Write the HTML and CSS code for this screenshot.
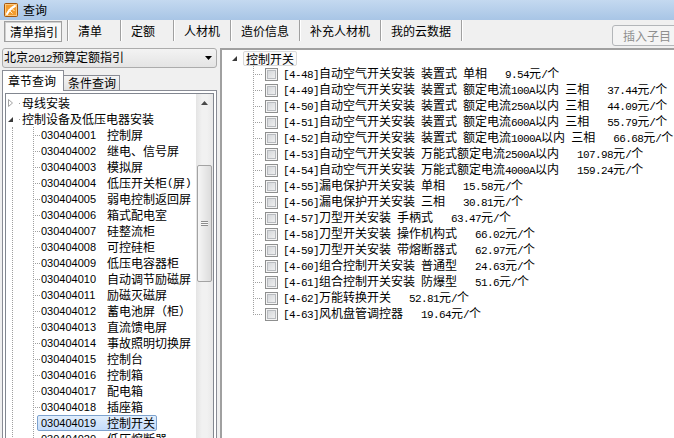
FILE: index.html
```html
<!DOCTYPE html>
<html lang="zh-CN">
<head>
<meta charset="utf-8">
<title>查询</title>
<link rel="stylesheet" href="styles.css">
</head>
<body>
<div class="window">
  <div class="titlebar">
    <svg class="appicon" viewBox="0 0 14 14">
      <rect x="0.5" y="0.5" width="13" height="13" rx="1" fill="#f39c2e" stroke="#a4560c"/>
      <rect x="1.5" y="1.5" width="11" height="11" fill="none" stroke="#fcc77a"/>
      <path d="M3 11 C5 7 8 4.5 11 3" stroke="#fff" stroke-width="2" fill="none" stroke-linecap="round"/>
      <path d="M4.5 6.5 L8.5 10.5 M7 4.5 L10.5 8" stroke="#fff2d8" stroke-width="1" fill="none"/>
    </svg>
    <span class="title">查询</span>
  </div>

  <div class="toolbar">
    <div class="tab active">清单指引</div>
    <div class="tab">清单</div>
    <div class="tab">定额</div>
    <div class="tab">人材机</div>
    <div class="tab">造价信息</div>
    <div class="tab">补充人材机</div>
    <div class="tab">我的云数据</div>
    <div class="tab-end"></div>
    <button class="insert" disabled>插入子目</button>
  </div>

  <div class="main">
    <div class="left">
      <div class="combo">
        <span class="combo-text">北京<span class="m">2012</span>预算定额指引</span>
        <svg class="combo-arrow" viewBox="0 0 7 4"><path d="M0 0H7L3.5 4Z" fill="#000"/></svg>
      </div>
      <div class="subtabs">
        <div class="subtab active">章节查询</div>
        <div class="subtab">条件查询</div>
      </div>
      <div class="page">
        <div class="listbox">
          <div class="ltree">
            <div class="lrow">
              <svg class="exp" viewBox="0 0 7 8"><path d="M1.5 0.5L5.5 4L1.5 7.5Z" fill="#fff" stroke="#a2a2a2"/></svg>
              <i class="tick"></i><span class="lbl">母线安装</span>
            </div>
            <div class="lrow">
              <svg class="exp" viewBox="0 0 7 8"><path d="M6 2V7H1Z" fill="#3a3a3a"/></svg>
              <i class="tick"></i><span class="lbl">控制设备及低压电器安装</span>
            </div>
            <div class="lgroup">
              <div class="crow"><i class="elbow"></i><span class="item"><span class="code">030404001</span>控制屏</span></div>
              <div class="crow"><i class="elbow"></i><span class="item"><span class="code">030404002</span>继电、信号屏</span></div>
              <div class="crow"><i class="elbow"></i><span class="item"><span class="code">030404003</span>模拟屏</span></div>
              <div class="crow"><i class="elbow"></i><span class="item"><span class="code">030404004</span>低压开关柜<span class="m">(</span>屏<span class="m">)</span></span></div>
              <div class="crow"><i class="elbow"></i><span class="item"><span class="code">030404005</span>弱电控制返回屏</span></div>
              <div class="crow"><i class="elbow"></i><span class="item"><span class="code">030404006</span>箱式配电室</span></div>
              <div class="crow"><i class="elbow"></i><span class="item"><span class="code">030404007</span>硅整流柜</span></div>
              <div class="crow"><i class="elbow"></i><span class="item"><span class="code">030404008</span>可控硅柜</span></div>
              <div class="crow"><i class="elbow"></i><span class="item"><span class="code">030404009</span>低压电容器柜</span></div>
              <div class="crow"><i class="elbow"></i><span class="item"><span class="code">030404010</span>自动调节励磁屏</span></div>
              <div class="crow"><i class="elbow"></i><span class="item"><span class="code">030404011</span>励磁灭磁屏</span></div>
              <div class="crow"><i class="elbow"></i><span class="item"><span class="code">030404012</span>蓄电池屏（柜）</span></div>
              <div class="crow"><i class="elbow"></i><span class="item"><span class="code">030404013</span>直流馈电屏</span></div>
              <div class="crow"><i class="elbow"></i><span class="item"><span class="code">030404014</span>事故照明切换屏</span></div>
              <div class="crow"><i class="elbow"></i><span class="item"><span class="code">030404015</span>控制台</span></div>
              <div class="crow"><i class="elbow"></i><span class="item"><span class="code">030404016</span>控制箱</span></div>
              <div class="crow"><i class="elbow"></i><span class="item"><span class="code">030404017</span>配电箱</span></div>
              <div class="crow"><i class="elbow"></i><span class="item"><span class="code">030404018</span>插座箱</span></div>
              <div class="crow"><i class="elbow"></i><span class="item sel"><span class="code">030404019</span>控制开关</span></div>
              <div class="crow"><i class="elbow"></i><span class="item"><span class="code">030404020</span>低压熔断器</span></div>
            </div>
          </div>
          <div class="vscroll">
            <div class="sb-up"><svg class="sb-arrow" viewBox="0 0 7 4"><path d="M0 4H7L3.5 0Z" fill="#4a4a4a"/></svg></div>
            <div class="thumb"><i class="grip"></i></div>
          </div>
        </div>
      </div>
    </div>

    <div class="right">
      <div class="rroot">
        <svg class="exp" viewBox="0 0 7 8"><path d="M6 2V7H1Z" fill="#3a3a3a"/></svg>
        <span class="rlabel">控制开关</span>
      </div>
      <div class="rrow"><i class="elbow w"></i><i class="chk"></i><span class="rtext"><span class="m">[4-48]</span>自动空气开关安装<span class="m"> </span>装置式<span class="m"> </span>单相<span class="m">   9.54</span>元<span class="m">/</span>个</span></div>
      <div class="rrow"><i class="elbow w"></i><i class="chk"></i><span class="rtext"><span class="m">[4-49]</span>自动空气开关安装<span class="m"> </span>装置式<span class="m"> </span>额定电流<span class="m">100A</span>以内<span class="m"> </span>三相<span class="m">   37.44</span>元<span class="m">/</span>个</span></div>
      <div class="rrow"><i class="elbow w"></i><i class="chk"></i><span class="rtext"><span class="m">[4-50]</span>自动空气开关安装<span class="m"> </span>装置式<span class="m"> </span>额定电流<span class="m">250A</span>以内<span class="m"> </span>三相<span class="m">   44.09</span>元<span class="m">/</span>个</span></div>
      <div class="rrow"><i class="elbow w"></i><i class="chk"></i><span class="rtext"><span class="m">[4-51]</span>自动空气开关安装<span class="m"> </span>装置式<span class="m"> </span>额定电流<span class="m">600A</span>以内<span class="m"> </span>三相<span class="m">   55.79</span>元<span class="m">/</span>个</span></div>
      <div class="rrow"><i class="elbow w"></i><i class="chk"></i><span class="rtext"><span class="m">[4-52]</span>自动空气开关安装<span class="m"> </span>装置式<span class="m"> </span>额定电流<span class="m">1000A</span>以内<span class="m"> </span>三相<span class="m">   66.68</span>元<span class="m">/</span>个</span></div>
      <div class="rrow"><i class="elbow w"></i><i class="chk"></i><span class="rtext"><span class="m">[4-53]</span>自动空气开关安装<span class="m"> </span>万能式额定电流<span class="m">2500A</span>以内<span class="m">   107.98</span>元<span class="m">/</span>个</span></div>
      <div class="rrow"><i class="elbow w"></i><i class="chk"></i><span class="rtext"><span class="m">[4-54]</span>自动空气开关安装<span class="m"> </span>万能式额定电流<span class="m">4000A</span>以内<span class="m">   159.24</span>元<span class="m">/</span>个</span></div>
      <div class="rrow"><i class="elbow w"></i><i class="chk"></i><span class="rtext"><span class="m">[4-55]</span>漏电保护开关安装<span class="m"> </span>单相<span class="m">   15.58</span>元<span class="m">/</span>个</span></div>
      <div class="rrow"><i class="elbow w"></i><i class="chk"></i><span class="rtext"><span class="m">[4-56]</span>漏电保护开关安装<span class="m"> </span>三相<span class="m">   30.81</span>元<span class="m">/</span>个</span></div>
      <div class="rrow"><i class="elbow w"></i><i class="chk"></i><span class="rtext"><span class="m">[4-57]</span>刀型开关安装<span class="m"> </span>手柄式<span class="m">   63.47</span>元<span class="m">/</span>个</span></div>
      <div class="rrow"><i class="elbow w"></i><i class="chk"></i><span class="rtext"><span class="m">[4-58]</span>刀型开关安装<span class="m"> </span>操作机构式<span class="m">   66.02</span>元<span class="m">/</span>个</span></div>
      <div class="rrow"><i class="elbow w"></i><i class="chk"></i><span class="rtext"><span class="m">[4-59]</span>刀型开关安装<span class="m"> </span>带熔断器式<span class="m">   62.97</span>元<span class="m">/</span>个</span></div>
      <div class="rrow"><i class="elbow w"></i><i class="chk"></i><span class="rtext"><span class="m">[4-60]</span>组合控制开关安装<span class="m"> </span>普通型<span class="m">   24.63</span>元<span class="m">/</span>个</span></div>
      <div class="rrow"><i class="elbow w"></i><i class="chk"></i><span class="rtext"><span class="m">[4-61]</span>组合控制开关安装<span class="m"> </span>防爆型<span class="m">   51.6</span>元<span class="m">/</span>个</span></div>
      <div class="rrow"><i class="elbow w"></i><i class="chk"></i><span class="rtext"><span class="m">[4-62]</span>万能转换开关<span class="m">   52.81</span>元<span class="m">/</span>个</span></div>
      <div class="rrow"><i class="elbow w last"></i><i class="chk"></i><span class="rtext"><span class="m">[4-63]</span>风机盘管调控器<span class="m">   19.64</span>元<span class="m">/</span>个</span></div>
    </div>
  </div>
</div>
</body>
</html>
```

FILE: styles.css
```css
* { box-sizing: border-box; }
html, body { margin: 0; padding: 0; }
body {
  width: 674px;
  height: 438px;
  overflow: hidden;
  background: #f0f0f0;
  color: #000;
  font: 12px/16px "Noto Sans CJK SC", "Noto Sans CJK JP", sans-serif;
}
.window {
  width: 674px;
  height: 438px;
  overflow: hidden;
  display: flex;
  flex-direction: column;
}

/* title bar */
.titlebar {
  height: 20px;
  flex: none;
  display: flex;
  align-items: center;
  padding-left: 4px;
  background: linear-gradient(#c4d9f0, #a8c5e6);
}
.appicon { width: 14px; height: 14px; flex: none; display: block; }
.title { margin-left: 5px; line-height: 16px; }

/* top tab strip */
.toolbar {
  height: 28px;
  flex: none;
  display: flex;
  align-items: flex-start;
  padding-left: 4px;
}
.tab {
  height: 21px;
  line-height: 21px;
  min-width: 53px;
  padding: 0 10px;
  border-left: 1px solid #a0a0a0;
  box-shadow: inset 1px 0 0 #fff;
  white-space: nowrap;
  flex: none;
}
.tab.active {
  width: 58px;
  min-width: 0;
  margin-top: 1px;
  margin-right: 5px;
  padding: 0 0 0 5px;
  line-height: 19px;
  border: 1px solid #a0a0a0;
  box-shadow: inset 1px 1px 0 #cfcfcf;
  background: #f7f7f7;
}
.tab-end {
  width: 2px;
  height: 21px;
  flex: none;
  border-left: 1px solid #a0a0a0;
  box-shadow: inset 1px 0 0 #fff;
}
.insert {
  flex: none;
  width: 80px;
  height: 21px;
  margin: 5px -18px 0 auto;
  padding: 0 0 0 10px;
  text-align: left;
  font: 12px/19px "Noto Sans CJK SC", sans-serif;
  color: #8f8f8f;
  background: #f4f4f4;
  border: 1px solid #b3b6b9;
  border-radius: 3px;
}

/* main split */
.main {
  height: 400px;
  flex: none;
  display: flex;
}
.left {
  width: 220px;
  flex: none;
  padding-left: 2px;
  display: flex;
  flex-direction: column;
}
.combo {
  width: 215px;
  height: 20px;
  flex: none;
  display: flex;
  align-items: center;
  justify-content: space-between;
  padding: 0 4px 0 1px;
  border: 1px solid #acacac;
  border-radius: 3px;
  background: linear-gradient(#f3f3f3, #e4e4e4);
  white-space: nowrap;
}
.combo-arrow { width: 7px; height: 4px; display: block; }

.subtabs {
  height: 21px;
  margin-top: 2px;
  flex: none;
  display: flex;
  align-items: flex-end;
  position: relative;
  z-index: 1;
}
.subtab {
  height: 15px;
  margin-bottom: 1px;
  padding: 0 3px 0 4px;
  line-height: 14px;
  border: 1px solid #898c95;
  border-left: 0;
  border-bottom: 0;
  background: linear-gradient(#f4f4f4, #e2e2e2);
  white-space: nowrap;
}
.subtab.active {
  width: 62px;
  height: 21px;
  margin-bottom: 0;
  padding: 0 0 0 5px;
  line-height: 19px;
  border-left: 1px solid #898c95;
  background: #fff;
}

.page {
  width: 215px;
  flex: 1;
  min-height: 0;
  margin-top: -1px;
  padding: 2px;
  border: 1px solid #898c95;
  background: #fff;
  display: flex;
}
.listbox {
  flex: 1;
  display: flex;
  border: 1px solid #828790;
  overflow: hidden;
}
.ltree {
  flex: 1;
  min-width: 0;
  padding-top: 1px;
  overflow: hidden;
}

/* left tree */
.lrow {
  height: 16px;
  display: flex;
  align-items: center;
  padding-left: 1px;
  white-space: nowrap;
}
.exp { width: 7px; height: 8px; flex: none; display: block; }
.tick { width: 1px; height: 1px; margin-left: 5px; background: #a0a0a0; flex: none; }
.lbl { margin-left: 2px; }
.lgroup {
  margin-left: 6px;
  border-left: 1px dotted #a0a0a0;
}
.crow {
  height: 16px;
  display: flex;
  align-items: center;
  padding-left: 20px;
  white-space: nowrap;
}
.elbow {
  width: 7px;
  height: 16px;
  flex: none;
  background:
    repeating-linear-gradient(to bottom, #a0a0a0 0 1px, transparent 1px 2px) 0 0 / 1px 100% no-repeat,
    repeating-linear-gradient(to right, #a0a0a0 0 1px, transparent 1px 2px) 0 8px / 100% 1px no-repeat;
}
.elbow.w { width: 10px; }
.elbow.last { background-size: 1px 9px, 100% 1px; }
.item {
  height: 16px;
  margin-left: -3px;
  padding: 0 1px 0 3px;
  border: 1px solid transparent;
  border-radius: 2px;
  display: flex;
  align-items: center;
  line-height: 14px;
}
.item.sel {
  border-color: #7da2ce;
  background: linear-gradient(#e1eefc, #c4dcfb);
}
.code {
  width: 66px;
  flex: none;
  font: 11px/14px "Liberation Sans", Arial, sans-serif;
}

/* scrollbar */
.vscroll {
  width: 17px;
  flex: none;
  display: flex;
  flex-direction: column;
  background: linear-gradient(to right, #e4e4e4, #f1f1f1 35%, #f1f1f1 65%, #e8e8e8);
}
.sb-up {
  height: 17px;
  flex: none;
  display: flex;
  align-items: center;
  justify-content: center;
}
.sb-arrow { width: 7px; height: 4px; display: block; }
.thumb {
  height: 117px;
  margin: 54px 1px 0;
  flex: none;
  display: flex;
  align-items: center;
  justify-content: center;
  border: 1px solid #a3a3a3;
  border-radius: 2px;
  background: linear-gradient(to right, #f6f6f6, #e9e9e9 50%, #dcdcdc);
}
.grip {
  width: 7px;
  height: 5px;
  background: repeating-linear-gradient(to bottom, #8c8c8c 0 1px, #f8f8f8 1px 2px);
}

/* right tree */
.right {
  flex: 1;
  min-width: 0;
  background: #fff;
  border-style: solid;
  border-color: #a0a0a0;
  border-width: 2px 0 0 2px;
  overflow: hidden;
}
.rroot {
  height: 16px;
  display: flex;
  align-items: center;
  padding-left: 9px;
}
.rlabel {
  height: 15px;
  margin-left: 5px;
  padding: 0 2px;
  line-height: 13px;
  border: 1px solid #d9d9d9;
  border-radius: 2px;
  background: #fafafa;
}
.rrow {
  height: 16px;
  display: flex;
  align-items: center;
  padding-left: 31px;
  white-space: nowrap;
}
.chk {
  width: 13px;
  height: 13px;
  margin-left: 2px;
  flex: none;
  border: 1px solid #8e8f8f;
  background: linear-gradient(135deg, #cdd0d4, #f6f6f6);
  box-shadow: inset 0 0 0 1px #f4f4f4, inset 0 0 0 2px #b8bbbf;
}
.rtext { margin-left: 5px; line-height: 16px; }

.m {
  font: 11px/16px "Liberation Mono", "DejaVu Sans Mono", monospace;
  letter-spacing: -0.6px;
  white-space: pre;
}
```
